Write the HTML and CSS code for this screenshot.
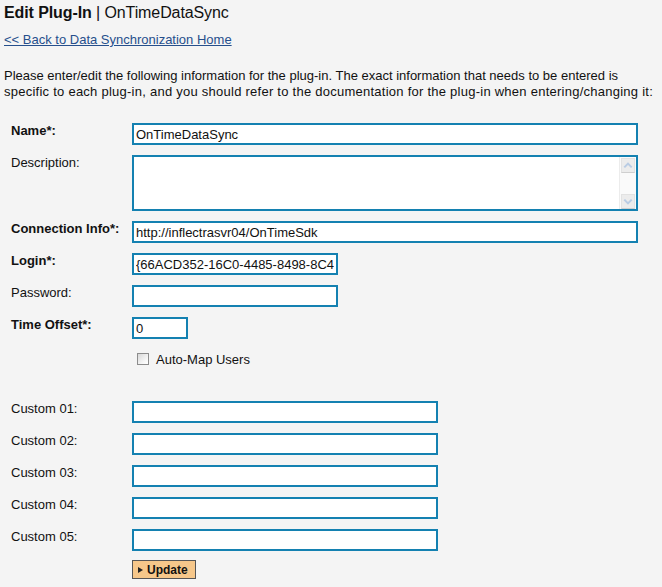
FILE: index.html
```html
<!DOCTYPE html>
<html>
<head>
<meta charset="utf-8">
<title>Edit Plug-In</title>
<link rel="stylesheet" href="styles.css">
</head>
<body>
<h1 class="title"><b>Edit Plug-In</b> | OnTimeDataSync</h1>
<a class="back" href="#">&lt;&lt; Back to Data Synchronization Home</a>
<p class="intro">Please enter/edit the following information for the plug-in. The exact information that needs to be entered is <span class="line2">specific to each plug-in, and you should refer to the documentation for the plug-in when entering/changing it:</span></p>
<form class="form">
  <label class="lbl req">Name*:</label>
  <input class="fld wide" type="text" value="OnTimeDataSync">

  <label class="lbl">Description:</label>
  <div class="area wide">
    <textarea class="area-text"></textarea>
    <div class="sbar">
      <div class="sbtn"><svg width="13" height="13" viewBox="0 0 13 13"><path d="M2.5 8.5 L6.5 4.5 L10.5 8.5" fill="none" stroke="#b9cce4" stroke-width="2.2"/></svg></div>
      <div class="sbtn"><svg width="13" height="13" viewBox="0 0 13 13"><path d="M2.5 4.5 L6.5 8.5 L10.5 4.5" fill="none" stroke="#b9cce4" stroke-width="2.2"/></svg></div>
    </div>
  </div>

  <label class="lbl req">Connection Info*:</label>
  <input class="fld wide" type="text" value="http://inflectrasvr04/OnTimeSdk">

  <label class="lbl req">Login*:</label>
  <input class="fld mid" type="text" value="{66ACD352-16C0-4485-8498-8C461F0A2B7E}">

  <label class="lbl">Password:</label>
  <input class="fld mid" type="password" value="">

  <label class="lbl req">Time Offset*:</label>
  <input class="fld small" type="text" value="0">

  <span class="lbl"></span>
  <label class="check"><input class="cb" type="checkbox"> Auto-Map Users</label>

  <label class="lbl">Custom 01:</label>
  <input class="fld custom" type="text">

  <label class="lbl">Custom 02:</label>
  <input class="fld custom" type="text">

  <label class="lbl">Custom 03:</label>
  <input class="fld custom" type="text">

  <label class="lbl">Custom 04:</label>
  <input class="fld custom" type="text">

  <label class="lbl">Custom 05:</label>
  <input class="fld custom" type="text">

  <span class="lbl"></span>
  <div class="actions">
    <button class="btn" type="button"><svg class="tri" width="5" height="6" viewBox="0 0 5 6"><path d="M0 0 L5 3 L0 6 Z" fill="#222"/></svg>Update</button>
  </div>
</form>
</body>
</html>
```

FILE: styles.css
```css
html, body {
  margin: 0;
  background: #f4f4f4;
}
body {
  padding: 0 4px;
  font-family: "Liberation Sans", Arial, sans-serif;
  font-size: 13px;
  color: #111;
}
.title {
  margin: 4px 0 0;
  font-size: 16px;
  line-height: 18px;
  font-weight: normal;
  color: #111;
  letter-spacing: -0.1px;
}
.title b {
  font-weight: bold;
}
.back {
  display: block;
  margin-top: 10px;
  line-height: 15px;
  color: #264f8c;
  text-decoration: underline;
  width: max-content;
}
.intro {
  margin: 21px 0 0;
  line-height: 16px;
}
.line2 {
  letter-spacing: 0.25px;
}
.form {
  margin: 23px 0 0 7px;
  display: grid;
  grid-template-columns: 121px 1fr;
  row-gap: 10px;
  align-items: start;
}
.lbl {
  line-height: 15px;
  color: #111;
}
.req {
  font-weight: bold;
}
.fld {
  box-sizing: border-box;
  height: 22px;
  border: 2px solid #1481b1;
  background: #fff;
  padding: 0 2px;
  margin: 0;
  font-family: "Liberation Sans", Arial, sans-serif;
  font-size: 13px;
  color: #111;
  outline: none;
}
.wide { width: 506px; }
.mid { width: 206px; }
.small { width: 56px; }
.custom { width: 306px; }
.area {
  box-sizing: border-box;
  height: 56px;
  border: 2px solid #1481b1;
  background: #fff;
  display: flex;
}
.area-text {
  flex: 1;
  border: 0;
  margin: 0;
  padding: 2px;
  resize: none;
  outline: none;
  background: #fff;
  font-family: "Liberation Sans", Arial, sans-serif;
  font-size: 13px;
}
.sbar {
  width: 15px;
  background: #fafafa;
  border-left: 1px solid #ececec;
  display: flex;
  flex-direction: column;
  justify-content: space-between;
  padding: 0 0 0 1px;
}
.sbtn {
  box-sizing: border-box;
  width: 14px;
  height: 15px;
  margin-top: 1px;
  background: #ececec;
  border: 1px solid #e2e2e2;
  border-bottom-color: #cfcfcf;
  display: flex;
  align-items: center;
  justify-content: center;
}
.sbtn:last-child {
  margin-top: 0;
  margin-bottom: 0;
}
.check {
  display: flex;
  align-items: center;
  gap: 7px;
  height: 20px;
  padding-left: 5px;
  line-height: 15px;
  margin-bottom: 22px;
}
.cb {
  appearance: none;
  -webkit-appearance: none;
  box-sizing: border-box;
  width: 12px;
  height: 12px;
  margin: 0;
  border: 1px solid #8c8c8c;
  background: linear-gradient(135deg, #d8d8d8, #f7f7f7 70%, #fff);
}
.actions {
  margin-top: -1px;
}
.btn {
  box-sizing: border-box;
  height: 19px;
  width: 64px;
  padding: 0 0 0 5px;
  border: 1px solid #555;
  background: #f6c78a;
  font-family: "Liberation Sans", Arial, sans-serif;
  font-size: 12px;
  font-weight: bold;
  color: #111;
  display: flex;
  align-items: center;
  gap: 4px;
}
.tri {
  display: block;
}
```
